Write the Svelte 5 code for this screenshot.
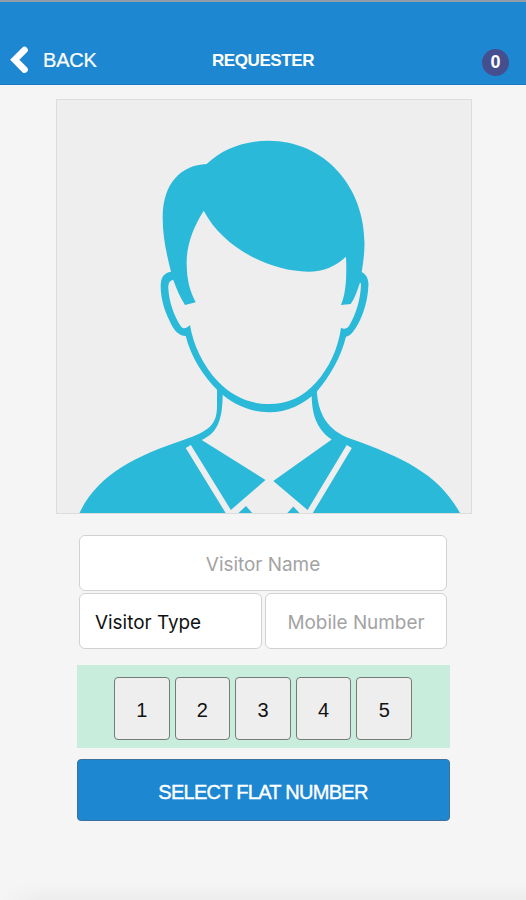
<script lang="ts">
  let visitorName = $state("");
  let mobileNumber = $state("");
  let pending = 0;

  const counts = [1, 2, 3, 4, 5];
</script>

<div class="screen">
  <header class="navbar">
    <button class="back">
      <svg class="chevron" viewBox="0 0 18 28" aria-hidden="true">
        <path d="M14.500 4 4.800 13.800 14.500 23.600" />
      </svg>
      <span>BACK</span>
    </button>
    <h1 class="title">REQUESTER</h1>
    <div class="right"><span class="badge">{pending}</span></div>
  </header>

  <main>
    <div class="photo">
      <svg viewBox="57 100 414 413" aria-hidden="true">
        <!-- hair, ears and jaw -->
        <path
          class="fill"
          fill-rule="evenodd"
          d="M171 271.700 C166 252 162.500 235 162.700 217 C163 183 181 165 206.700 164 C222 149 244 140.700 268.300 140.700 C325 140.700 364.500 187 364.500 243.300 C364.500 254 363 264 361.700 272 C367 275 369 280 368.300 287 C367.500 304 361 322 353 331.700 C351 334.500 349 336 346 336.700 C341 357 330 376 316.700 391.700 C303 405 287 412.300 269 412.300 C250 412.300 232 404 218.300 391 C203 376 191 357 185.700 336 C179 335.500 174 331 170 321.700 C164 310 160.700 298 160.700 286 C160.700 277 164 273 171 271.700 Z
          M173.300 280 C169.500 280.500 168.300 283 168.300 288 C169 302 174 316 181 326.500 C183.500 329.500 186 328.500 190 325 C193 344 203 366 218 381.500 C232 396 249 404 269 404 C288 404 303 397 316 382.500 C329 368 338 349 341 327.700 C344 329.500 346.500 329 349 326 C356 314 360.500 300 361 284 L360 282.500 C357.500 290 355 298 350.700 304 L341 305 C346.500 291 346.700 275 346 256.700 C336 266 324 271.700 308 271.700 C267 271 222 246 203.700 210.700 C192 229 186 248 186.700 265 C187 281 190 291 195.700 302.300 L185 305 C180 297 176.500 289 173.300 280 Z"
        />
        <!-- neck and shoulders -->
        <path
          class="fill"
          d="M217 387 L217 406 C217 424 210 431 183.300 440 C136 456 98 474 79.500 513 H228 L231.700 509.300 L265.500 480 L201.700 440 C217 433 222.700 421 222.700 393 Z"
        />
        <path
          class="fill"
          d="M460 513 C439 475 405 458 350 438.500 C329 431 317 415 316.700 387 L311.700 393 C311.500 413 316 429 331.700 439.500 L273.300 481 L306.700 509.300 L310 513 Z"
        />
        <path class="fill" d="M238.500 513 L246 506 L252.300 513 Z M287.300 513 L293.300 506.500 L299.500 513 Z" />
        <path class="seam" d="M188.300 446.500 L229.500 513.500 M349.300 446.500 L309 513.500" />
      </svg>
    </div>

    <form class="form">
      <input class="field name" placeholder="Visitor Name" bind:value={visitorName} />
      <button type="button" class="field type">Visitor Type</button>
      <input class="field mobile" placeholder="Mobile Number" bind:value={mobileNumber} />
    </form>

    <div class="counts">
      {#each counts as count}
        <button class="count">{count}</button>
      {/each}
    </div>

    <button class="select">SELECT FLAT NUMBER</button>
  </main>
  <div class="bottom-shade"></div>
</div>

<style>
  :global(body) {
    margin: 0;
    background: #f5f5f5;
  }
  .screen {
    display: flex;
    flex-direction: column;
    height: 900px;
    box-sizing: border-box;
    background: #f5f5f5;
    font-family: "Liberation Sans", Arial, sans-serif;
  }
  button,
  input {
    box-sizing: border-box;
    margin: 0;
    font-family: inherit;
  }
  .navbar {
    display: grid;
    grid-template-columns: 1fr auto 1fr;
    align-items: center;
    box-sizing: border-box;
    height: 85px;
    padding: 35px 17px 0 10px;
    background: #1d87d1;
    border-top: 2px solid #929ba8;
    border-bottom: 1px solid #167bc5;
    color: #fff;
  }
  .back {
    display: flex;
    align-items: center;
    gap: 15px;
    padding: 0;
    border: none;
    background: none;
    color: #fff;
    font-size: 20px;
    letter-spacing: -0.2px;
    -webkit-text-stroke: 0.2px #fff;
  }
  .chevron {
    width: 18px;
    height: 28px;
    margin-top: -2px;
  }
  .chevron path {
    fill: none;
    stroke: #fff;
    stroke-width: 6.6;
    stroke-linecap: round;
  }
  .title {
    margin: 1px 0 0 7px;
    font-size: 17px;
    letter-spacing: -0.4px;
  }
  .right {
    display: flex;
    justify-content: flex-end;
    padding-top: 4px;
  }
  .badge {
    width: 27px;
    height: 27px;
    border-radius: 50%;
    background: #454f90;
    font-size: 18px;
    font-weight: bold;
    line-height: 27px;
    text-align: center;
  }
  main {
    flex: 1;
    display: flex;
    flex-direction: column;
    align-items: center;
    padding-top: 14px;
  }
  .photo {
    box-sizing: border-box;
    width: 416px;
    height: 415px;
    margin-left: 2px;
    border: 1px solid #dcdcdc;
    background: #eee;
  }
  .photo svg {
    display: block;
    width: 414px;
    height: 413px;
  }
  .fill {
    fill: #2bb9d9;
  }
  .seam {
    fill: none;
    stroke: #eee;
    stroke-width: 6;
  }
  .form {
    display: grid;
    grid-template-columns: 183px 182px;
    gap: 2px;
    column-gap: 3px;
    margin-top: 21px;
  }
  .field {
    width: 100%;
    height: 56px;
    padding: 2px 15px 0;
    border: 1.5px solid #d2d2d2;
    border-radius: 6px;
    background: #fff;
    color: #111;
    font-family: Inter, "Liberation Sans", sans-serif;
    font-size: 18.9px;
    text-align: center;
  }
  .field::placeholder {
    color: #a3a3a3;
    opacity: 1;
  }
  .name {
    grid-column: 1 / -1;
  }
  .type {
    text-align: left;
  }
  .counts {
    display: flex;
    justify-content: center;
    align-items: center;
    gap: 5px;
    box-sizing: border-box;
    width: 373px;
    height: 83px;
    margin-top: 16px;
    padding-top: 4px;
    background: #c9eddc;
  }
  .count {
    width: 55.6px;
    height: 63px;
    padding: 4px 0 0;
    border: 1px solid #747b78;
    border-radius: 4px;
    background: #eee;
    color: #111;
    font-size: 20px;
  }
  .select {
    width: 373px;
    height: 62px;
    margin-top: 11px;
    padding: 5px 0 0;
    border: 1px solid #3d6f98;
    border-radius: 4px;
    background: #1d87d1;
    color: #fff;
    font-size: 20px;
    letter-spacing: -0.72px;
    -webkit-text-stroke: 0.4px #fff;
  }
  .bottom-shade {
    height: 16px;
    background: linear-gradient(to right, #f5f5f5, transparent 40px),
      linear-gradient(#f5f5f5, #ededed);
  }
</style>
